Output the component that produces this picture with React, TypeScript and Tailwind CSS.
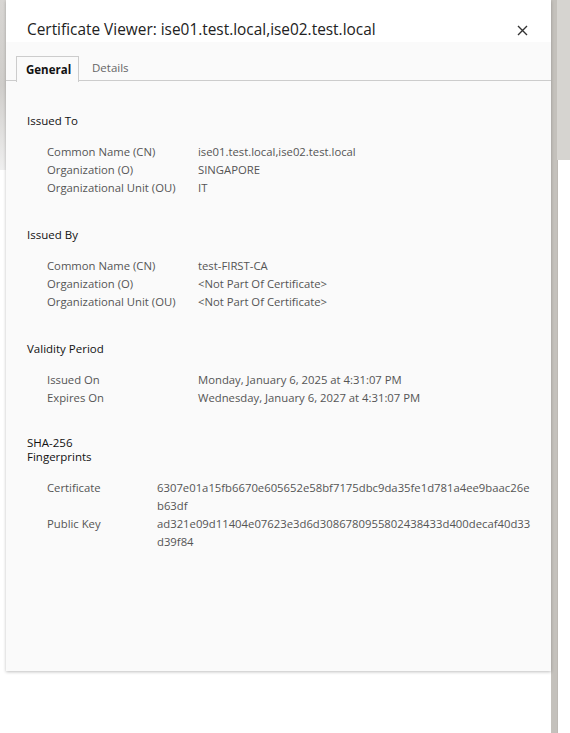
import React from 'react'

type Row = { label: string; value: string[] }

const font = { fontFamily: '"Open Sans", "Noto Sans", sans-serif' }

function Section({
  title,
  rows,
  labelCol = 'w-[151px]',
  className = '',
}: {
  title: React.ReactNode
  rows: Row[]
  labelCol?: string
  className?: string
}) {
  return (
    <div className={className}>
      <div className="text-[11.5px] leading-[14px] text-[#111]">{title}</div>
      <div className="mt-[15px] pl-[20px]">
        {rows.map((r) => (
          <div key={r.label} className="flex text-[11.3px] leading-[18px] text-[#555]">
            <div className={`${labelCol} shrink-0`}>{r.label}</div>
            <div className="whitespace-nowrap">
              {r.value.map((line) => (
                <div key={line}>{line}</div>
              ))}
            </div>
          </div>
        ))}
      </div>
    </div>
  )
}

export default function App() {
  return (
    <div className="relative h-[733px] w-[570px] overflow-hidden bg-white" style={font}>
      {/* page behind the dialog */}
      <div className="absolute left-0 top-0 h-[170px] w-[6px] bg-gradient-to-b from-[#d8d6d3] via-[#cfcdca] to-[#efefef]" />
      <div className="absolute right-0 top-0 flex h-full w-[19px]">
        <div className="h-full w-[6px] bg-[#c4c1bc]" />
        <div className="flex h-full flex-1 flex-col">
          <div className="h-[160px] bg-[#d6d4d0]" />
          <div className="flex-1 border-l border-[#bdb9b4] bg-white" />
        </div>
      </div>

      {/* dialog */}
      <div className="absolute left-[6px] top-0 flex h-[671px] w-[545px] flex-col bg-[#fafafa] shadow-[0_1px_3px_rgba(0,0,0,0.25)]">
        <div className="flex h-[42px] items-center justify-between bg-white pl-[21px] pr-[23px] pt-[18px]">
          <div className="text-[15.4px] leading-[20px] text-[#222]">
            Certificate Viewer: ise01.test.local,ise02.test.local
          </div>
          <svg width="11" height="11" viewBox="0 0 11 11">
            <path d="M1 1 L10 10 M10 1 L1 10" stroke="#333" strokeWidth="1.4" />
          </svg>
        </div>

        <div className="mt-[14px] flex h-[25px] border-b border-[#ccc] pl-[10px]">
          <div className="-mb-px flex h-[26px] w-[63px] items-center border border-b-0 border-[#ccc] bg-[#fafafa] pl-[9px] text-[11.5px] font-bold text-[#111]">
            General
          </div>
          <div className="flex items-center pl-[13px] text-[11.5px] text-[#666]">Details</div>
        </div>

        <div className="flex flex-col pl-[21px] pt-[33px]">
          <Section
            title="Issued To"
            rows={[
              { label: 'Common Name (CN)', value: ['ise01.test.local,ise02.test.local'] },
              { label: 'Organization (O)', value: ['SINGAPORE'] },
              { label: 'Organizational Unit (OU)', value: ['IT'] },
            ]}
          />
          <Section
            className="mt-[31px]"
            title="Issued By"
            rows={[
              { label: 'Common Name (CN)', value: ['test-FIRST-CA'] },
              { label: 'Organization (O)', value: ['<Not Part Of Certificate>'] },
              { label: 'Organizational Unit (OU)', value: ['<Not Part Of Certificate>'] },
            ]}
          />
          <Section
            className="mt-[31px]"
            title="Validity Period"
            rows={[
              { label: 'Issued On', value: ['Monday, January 6, 2025 at 4:31:07 PM'] },
              { label: 'Expires On', value: ['Wednesday, January 6, 2027 at 4:31:07 PM'] },
            ]}
          />
          <Section
            className="mt-[29px]"
            title={
              <>
                SHA-256
                <br />
                Fingerprints
              </>
            }
            labelCol="w-[110px]"
            rows={[
              {
                label: 'Certificate',
                value: ['6307e01a15fb6670e605652e58bf7175dbc9da35fe1d781a4ee9baac26e', 'b63df'],
              },
              {
                label: 'Public Key',
                value: ['ad321e09d11404e07623e3d6d3086780955802438433d400decaf40d33', 'd39f84'],
              },
            ]}
          />
        </div>
      </div>
    </div>
  )
}
